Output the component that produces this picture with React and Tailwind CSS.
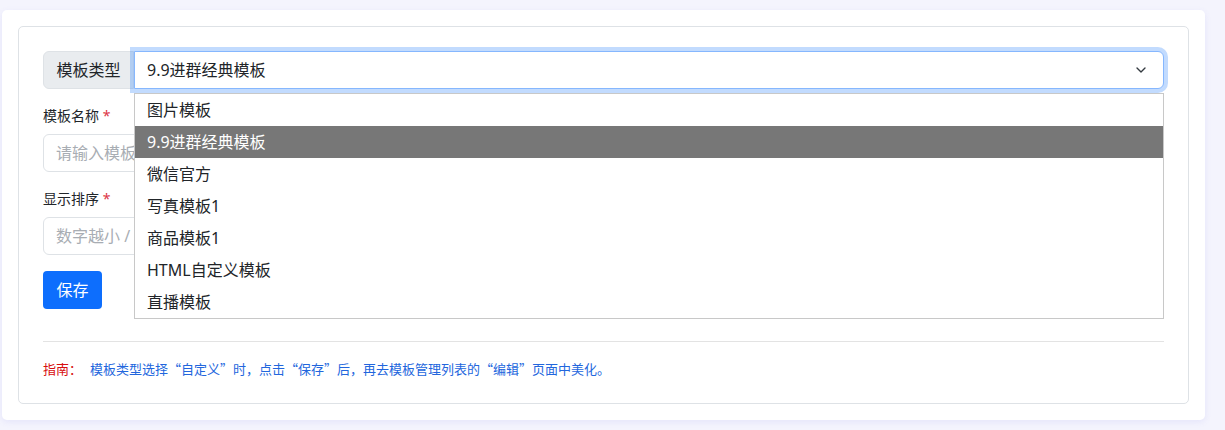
import { ChevronDown } from 'lucide-react';

const OPTIONS = ['图片模板', '9.9进群经典模板', '微信官方', '写真模板1', '商品模板1', 'HTML自定义模板', '直播模板'];

function Field({ label, placeholder }) {
  return (
    <div className="mb-4">
      <label className="mb-2 block text-[14px] leading-[21px] text-[#212529]">
        {label} <span className="text-[#dc3545]">*</span>
      </label>
      <input
        className="block h-[38px] w-full rounded-[6px] border border-[#dee2e6] bg-white px-3 text-[16px] text-[#212529] outline-none placeholder:text-[#a8adb3]"
        placeholder={placeholder}
      />
    </div>
  );
}

export default function App() {
  const selected = '9.9进群经典模板';
  return (
    <div
      className="min-h-[430px] bg-[#f4f4fd] pt-[10px] pl-[2px] pr-[20px]"
      style={{ fontFamily: '"Noto Sans", "Noto Sans CJK SC", sans-serif' }}
    >
      <div className="rounded-[5px] bg-white p-4 shadow-[0_2px_6px_rgba(120,120,230,0.12)]">
        <div className="rounded-[5px] border border-[#dee2e6] px-6 pt-6 pb-6">
          <div className="relative mb-4 flex h-[38px]">
            <span className="flex w-[91px] items-center justify-center rounded-l-[6px] border border-[#dee2e6] bg-[#e9ecef] text-[16px] text-[#212529]">
              模板类型
            </span>
            <div className="flex flex-1 items-center justify-between rounded-r-[6px] border border-[#86b7fe] bg-white pl-3 pr-[14px] text-[16px] text-[#212529] shadow-[0_0_0_4px_rgba(13,110,253,0.25)]">
              <span>{selected}</span>
              <ChevronDown size={16} strokeWidth={2} className="text-[#343a40]" />
            </div>
            <ul className="absolute top-[42px] left-[91px] right-0 z-10 border border-[#c8c8c8] bg-white py-0">
              {OPTIONS.map((o) => (
                <li
                  key={o}
                  className={
                    o === selected
                      ? 'flex h-[32px] items-center bg-[#777777] px-3 text-[16px] text-white'
                      : 'flex h-[32px] items-center px-3 text-[16px] text-[#212529]'
                  }
                >
                  {o}
                </li>
              ))}
            </ul>
          </div>

          <Field label="模板名称" placeholder="请输入模板名称" />
          <Field label="显示排序" placeholder="数字越小 / 越靠前" />

          <button className="h-[38px] w-[59px] rounded-[4px] bg-[#0d6efd] text-[16px] text-white">保存</button>

          <hr className="mt-8 mb-0 border-t border-[#e3e3e3]" />

          <p
            className="mt-[17px] flex text-[13px] leading-[20px]"
            style={{ fontFamily: '"Noto Sans CJK SC", sans-serif' }}
          >
            <span className="mr-[8px] text-[#d70f0f]">指南：</span>
            <span className="text-[#2266dd]">模板类型选择“自定义”时，点击“保存”后，再去模板管理列表的“编辑”页面中美化。</span>
          </p>
        </div>
      </div>
    </div>
  );
}
